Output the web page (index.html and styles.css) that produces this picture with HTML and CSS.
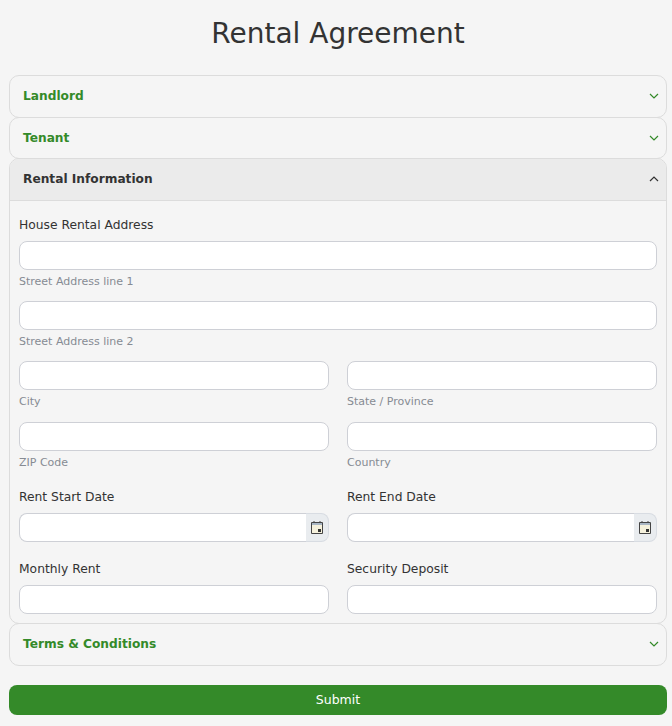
FILE: index.html
```html
<!DOCTYPE html>
<html>
<head>
    <title>Rental Agreement</title>
    <link rel="stylesheet" href="styles.css">
</head>
<body>
    <h1 class="title">Rental Agreement</h1>

    <div class="accordion">
        <div class="item">
            <div class="item-head">
                <span>Landlord</span>
                <svg class="chevron" width="10" height="6" viewBox="0 0 10 6"><path d="M1 1l4 4 4-4"/></svg>
            </div>
        </div>
        <div class="item">
            <div class="item-head">
                <span>Tenant</span>
                <svg class="chevron" width="10" height="6" viewBox="0 0 10 6"><path d="M1 1l4 4 4-4"/></svg>
            </div>
        </div>
        <div class="item open">
            <div class="item-head">
                <span>Rental Information</span>
                <svg class="chevron" width="10" height="6" viewBox="0 0 10 6"><path d="M1 5l4-4 4 4"/></svg>
            </div>
            <div class="item-body">
                <label class="label">House Rental Address</label>
                <div class="field">
                    <input type="text">
                    <small>Street Address line 1</small>
                </div>
                <div class="field">
                    <input type="text">
                    <small>Street Address line 2</small>
                </div>
                <div class="row">
                    <div class="field">
                        <input type="text">
                        <small>City</small>
                    </div>
                    <div class="field">
                        <input type="text">
                        <small>State / Province</small>
                    </div>
                </div>
                <div class="row">
                    <div class="field">
                        <input type="text">
                        <small>ZIP Code</small>
                    </div>
                    <div class="field">
                        <input type="text">
                        <small>Country</small>
                    </div>
                </div>
                <div class="row dates">
                    <div>
                        <label class="label">Rent Start Date</label>
                        <div class="date-input">
                            <input type="text">
                            <span class="date-btn">
                                <svg width="12" height="13" viewBox="0 0 12 13"><path class="cal-line" d="M.5 1.500h11v11H.5zM3 0v2M9 0v2"/><path class="cal-band" d="M1 2h10v2H1z"/><path class="cal-dot" d="M7 8h3v3H7z"/></svg>
                            </span>
                        </div>
                    </div>
                    <div>
                        <label class="label">Rent End Date</label>
                        <div class="date-input">
                            <input type="text">
                            <span class="date-btn">
                                <svg width="12" height="13" viewBox="0 0 12 13"><path class="cal-line" d="M.5 1.500h11v11H.5zM3 0v2M9 0v2"/><path class="cal-band" d="M1 2h10v2H1z"/><path class="cal-dot" d="M7 8h3v3H7z"/></svg>
                            </span>
                        </div>
                    </div>
                </div>
                <div class="row money">
                    <div>
                        <label class="label">Monthly Rent</label>
                        <input type="text">
                    </div>
                    <div>
                        <label class="label">Security Deposit</label>
                        <input type="text">
                    </div>
                </div>
            </div>
        </div>
        <div class="item">
            <div class="item-head">
                <span>Terms &amp; Conditions</span>
                <svg class="chevron" width="10" height="6" viewBox="0 0 10 6"><path d="M1 1l4 4 4-4"/></svg>
            </div>
        </div>
    </div>

    <button class="submit">Submit</button>
</body>
</html>
```

FILE: styles.css
```css
body {
    margin: 0;
    padding: 0 5px 0 9px;
    background-color: #f5f5f5;
    color: #333;
    font-family: "DejaVu Sans", sans-serif;
    font-size: 12.3px;
}
.title {
    margin: 0;
    height: 75px;
    padding-top: 16px;
    box-sizing: border-box;
    text-align: center;
    font-size: 28px;
    line-height: 36px;
    font-weight: 400;
}
.item {
    border: 1px solid #dcdcdc;
    border-radius: 10px;
    margin-bottom: -1px;
    overflow: hidden;
}
.item-head {
    display: flex;
    align-items: center;
    justify-content: space-between;
    height: 40.5px;
    padding: 0 7px 0 13px;
    color: #348a29;
    font-weight: 700;
    font-size: 12.2px;
}
.chevron {
    fill: none;
    stroke: #348a29;
    stroke-width: 1.2;
}
.open .item-head {
    background-color: #ebebeb;
    border-bottom: 1px solid #dcdcdc;
    color: #333;
}
.open .chevron {
    stroke: #333;
}
.item-body {
    padding: 16.5px 9px 9.5px 9px;
}
.label {
    display: block;
    line-height: 17px;
    margin-bottom: 7px;
}
input {
    display: block;
    width: 100%;
    height: 29px;
    box-sizing: border-box;
    border: 1px solid #ced0d6;
    border-radius: 8px;
    background-color: #fff;
}
.field {
    margin-bottom: 12.2px;
}
.field small {
    display: block;
    margin-top: 5px;
    line-height: 14px;
    font-size: 11px;
    color: #868b93;
}
.row {
    display: grid;
    grid-template-columns: 1fr 1fr;
    column-gap: 18px;
}
.dates {
    margin-top: 6.9px;
    margin-bottom: 19px;
}
.date-input {
    display: flex;
}
.date-input input {
    border-radius: 8px 0 0 8px;
    border-right: 0;
}
.date-btn {
    display: flex;
    align-items: center;
    justify-content: center;
    flex-shrink: 0;
    width: 22px;
    border: 1px solid #d8dce2;
    border-left: 0;
    border-radius: 0 8px 8px 0;
    background-color: #e9ecef;
}
.cal-line {
    fill: #f5f1dc;
    stroke: #444;
}
.cal-band {
    fill: #a9b6c4;
}
.cal-dot {
    fill: #333;
}
.submit {
    display: block;
    width: 100%;
    height: 30px;
    margin-top: 20.5px;
    padding-bottom: 3px;
    border: 0;
    border-radius: 8px;
    background-color: #348a29;
    color: #fff;
    font-family: inherit;
    font-size: 12.5px;
}
```
